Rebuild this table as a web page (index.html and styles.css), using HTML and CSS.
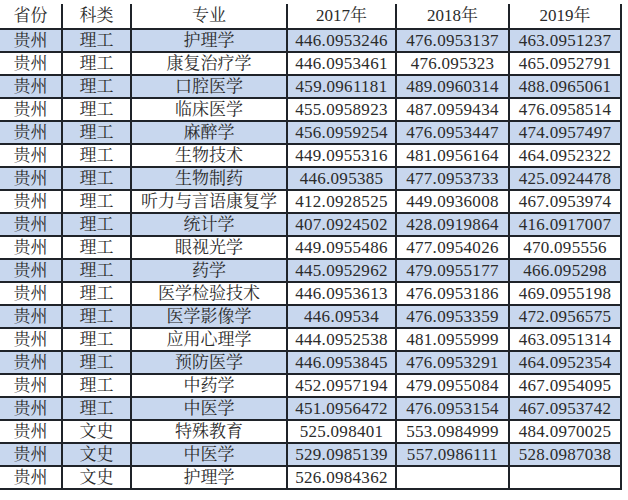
FILE: index.html
```html
<!DOCTYPE html>
<html lang="zh">
<head>
<meta charset="utf-8">
<link rel="stylesheet" href="styles.css">
</head>
<body>
<table class="sheet">
  <colgroup>
    <col class="c-prov"><col class="c-type"><col class="c-major"><col class="c-y"><col class="c-y"><col class="c-y">
  </colgroup>
  <thead>
    <tr class="head"><td>省份</td><td>科类</td><td>专业</td><td>2017年</td><td>2018年</td><td>2019年</td></tr>
  </thead>
  <tbody>
    <tr class="blue"><td>贵州</td><td>理工</td><td>护理学</td><td class="num">446.0953246</td><td class="num">476.0953137</td><td class="num">463.0951237</td></tr>
    <tr><td>贵州</td><td>理工</td><td>康复治疗学</td><td class="num">446.0953461</td><td class="num">476.095323</td><td class="num">465.0952791</td></tr>
    <tr class="blue"><td>贵州</td><td>理工</td><td>口腔医学</td><td class="num">459.0961181</td><td class="num">489.0960314</td><td class="num">488.0965061</td></tr>
    <tr><td>贵州</td><td>理工</td><td>临床医学</td><td class="num">455.0958923</td><td class="num">487.0959434</td><td class="num">476.0958514</td></tr>
    <tr class="blue"><td>贵州</td><td>理工</td><td>麻醉学</td><td class="num">456.0959254</td><td class="num">476.0953447</td><td class="num">474.0957497</td></tr>
    <tr><td>贵州</td><td>理工</td><td>生物技术</td><td class="num">449.0955316</td><td class="num">481.0956164</td><td class="num">464.0952322</td></tr>
    <tr class="blue"><td>贵州</td><td>理工</td><td>生物制药</td><td class="num">446.095385</td><td class="num">477.0953733</td><td class="num">425.0924478</td></tr>
    <tr><td>贵州</td><td>理工</td><td>听力与言语康复学</td><td class="num">412.0928525</td><td class="num">449.0936008</td><td class="num">467.0953974</td></tr>
    <tr class="blue"><td>贵州</td><td>理工</td><td>统计学</td><td class="num">407.0924502</td><td class="num">428.0919864</td><td class="num">416.0917007</td></tr>
    <tr><td>贵州</td><td>理工</td><td>眼视光学</td><td class="num">449.0955486</td><td class="num">477.0954026</td><td class="num">470.095556</td></tr>
    <tr class="blue"><td>贵州</td><td>理工</td><td>药学</td><td class="num">445.0952962</td><td class="num">479.0955177</td><td class="num">466.095298</td></tr>
    <tr><td>贵州</td><td>理工</td><td>医学检验技术</td><td class="num">446.0953613</td><td class="num">476.0953186</td><td class="num">469.0955198</td></tr>
    <tr class="blue"><td>贵州</td><td>理工</td><td>医学影像学</td><td class="num">446.09534</td><td class="num">476.0953359</td><td class="num">472.0956575</td></tr>
    <tr><td>贵州</td><td>理工</td><td>应用心理学</td><td class="num">444.0952538</td><td class="num">481.0955999</td><td class="num">463.0951314</td></tr>
    <tr class="blue"><td>贵州</td><td>理工</td><td>预防医学</td><td class="num">446.0953845</td><td class="num">476.0953291</td><td class="num">464.0952354</td></tr>
    <tr><td>贵州</td><td>理工</td><td>中药学</td><td class="num">452.0957194</td><td class="num">479.0955084</td><td class="num">467.0954095</td></tr>
    <tr class="blue"><td>贵州</td><td>理工</td><td>中医学</td><td class="num">451.0956472</td><td class="num">476.0953154</td><td class="num">467.0953742</td></tr>
    <tr><td>贵州</td><td>文史</td><td>特殊教育</td><td class="num">525.098401</td><td class="num">553.0984999</td><td class="num">484.0970025</td></tr>
    <tr class="blue"><td>贵州</td><td>文史</td><td>中医学</td><td class="num">529.0985139</td><td class="num">557.0986111</td><td class="num">528.0987038</td></tr>
    <tr><td>贵州</td><td>文史</td><td>护理学</td><td class="num">526.0984362</td><td class="num"></td><td class="num"></td></tr>
  </tbody>
</table>
</body>
</html>
```

FILE: styles.css
```css
html, body {
  margin: 0;
  padding: 0;
  background: #ffffff;
}
body {
  padding-top: 4px;
}
.sheet {
  border-collapse: separate;
  border-spacing: 0;
  table-layout: fixed;
  width: 622px;
  font-family: "Liberation Serif", "Noto Serif CJK SC", "Noto Sans CJK SC", serif;
  font-size: 17px;
  color: #2b2b2b;
}
.c-prov { width: 63px; }
.c-type { width: 69px; }
.c-major { width: 156px; }
.c-y:nth-child(4) { width: 109px; }
.c-y:nth-child(5) { width: 113px; }
.c-y:nth-child(6) { width: 112px; }
.sheet td {
  box-sizing: border-box;
  height: 23px;
  padding: 0;
  text-align: center;
  vertical-align: middle;
  white-space: nowrap;
  line-height: 19px;
  border-right: 2px solid #1f2329;
  border-bottom: 2px solid #1f2329;
}
.sheet td:first-child {
  border-left: none;
}
.head td {
  height: 26px;
  padding-bottom: 2px;
}
.blue td {
  background: #c8d7ee;
}
.num {
  letter-spacing: 0.3px;
}
```
